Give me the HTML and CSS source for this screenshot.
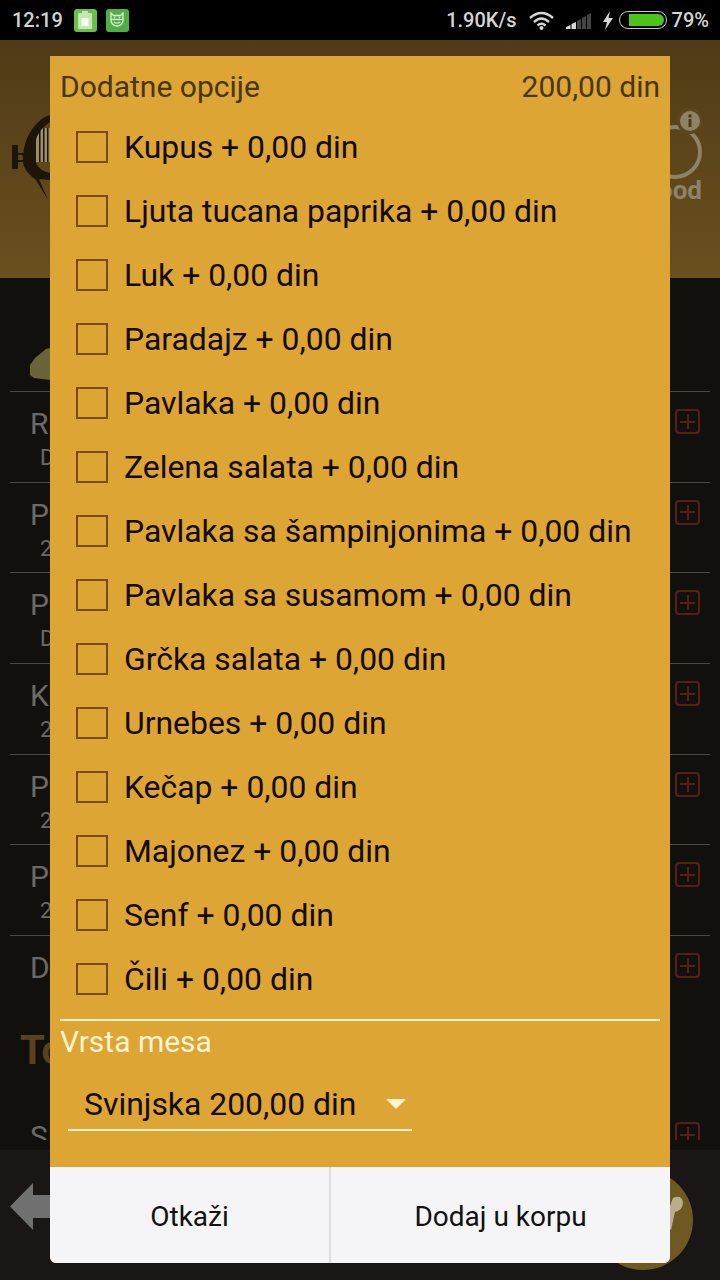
FILE: index.html
```html
<!DOCTYPE html>
<html lang="en">

<head>
    <meta charset="UTF-8">
    <title>Dodatne opcije</title>
    <link rel="stylesheet" href="styles.css">
</head>

<body>

    <div class="screen">

        <div class="statusbar">
            <div class="status-left">
                <span class="clock">12:19</span>
                <span class="note note-light">
                    <svg width="14" height="18" viewBox="0 0 14 18"><path d="M4 0h6v2h3a1 1 0 0 1 1 1v14a1 1 0 0 1-1 1H1a1 1 0 0 1-1-1V3a1 1 0 0 1 1-1h3z" fill="#c4e8b0"/><rect x="3.500" y="7" width="7" height="8" fill="#f2fbec"/></svg>
                </span>
                <span class="note">
                    <svg width="16" height="16" viewBox="0 0 16 16"><path d="M2 1l2.500 2.500h7L14 1v7a6 6 0 0 1-12 0z" fill="none" stroke="#d6f0c8" stroke-width="1.400"/><path d="M2 7.500h12" stroke="#d6f0c8" stroke-width="1.200"/><circle cx="5.500" cy="5.500" r="1" fill="#d6f0c8"/><circle cx="10.500" cy="5.500" r="1" fill="#d6f0c8"/><path d="M5 10q3 2.500 6 0" fill="none" stroke="#d6f0c8" stroke-width="1.200"/></svg>
                </span>
            </div>
            <div class="status-right">
                <span class="speed">1.90K/s</span>
                <svg class="wifi" width="25" height="19" viewBox="0 0 25 19" fill="none" stroke="#d8d8d8" stroke-width="2.400"><path d="M1 7Q12.500-3 24 7"/><path d="M5 11Q12.500 4 20 11"/><path d="M8.500 14.500Q12.500 11 16.500 14.500"/><circle cx="12.500" cy="17" r="2" fill="#d8d8d8" stroke="none"/></svg>
                <svg class="signal" width="26" height="17" viewBox="0 0 26 17"><path d="M0 17v-2l4.500-2v4z" fill="#d8d8d8"/><path d="M5.500 17v-5l4.500-2v7z" fill="#d8d8d8"/><path d="M11 17V9l4-2v10z" fill="#444"/><path d="M16 17V6l4-2v13z" fill="#444"/><path d="M21 17V3l4-2v16z" fill="#444"/></svg>
                <svg class="bolt" width="10" height="19" viewBox="0 0 10 19"><path d="M7 0L0 11h4l-2 8 8-12H5.500z" fill="#d8d8d8"/></svg>
                <span class="battery"><span class="battery-fill"></span></span>
                <span class="percent">79%</span>
            </div>
        </div>

        <div class="header">
            <svg class="logo" width="50" height="100" viewBox="0 0 50 100">
                <rect x="36" y="18" width="14" height="34" fill="#9a8d68"/>
                <path d="M39 18h1.500v34H39zM43 18h1.500v34H43zM47 18h1.500v34H47z" fill="#1d150a"/>
                <path d="M50 5C35 10 23 28 23 50c0 8 5 14 13 20l12 20-9-21 11 1v-7c-6-1-11-4-14-10V30c2-8 8-14 14-18z" fill="#1d150a"/>
                <rect x="12" y="35" width="6" height="24" fill="#1d150a"/>
                <path d="M18 43h6v2h-6zM18 50h6v2h-6z" fill="#1d150a"/>
            </svg>
            <div class="info-logo">
                <svg width="60" height="72" viewBox="0 0 60 72" fill="none"><circle cx="29" cy="44" r="25" stroke="#8f8266" stroke-width="4"/><circle cx="44" cy="13" r="13" fill="#5d461c"/><circle cx="44" cy="13" r="10" fill="#8f8266"/><rect x="42.500" y="11" width="3" height="8" fill="#4d3a18"/><rect x="42.500" y="6.500" width="3" height="3" fill="#4d3a18"/></svg>
                <span class="info-text">ood</span>
            </div>
        </div>

        <div class="content">
            <div class="section-top">
                <svg class="food-thumb" width="20" height="32" viewBox="0 0 20 32"><path d="M0 17l5-7L16 1l4-1v32l-16-2-4-3z" fill="#6b6438"/></svg>
            </div>
            <div class="food-row">
                <div class="food-text"><p class="food-name">R</p><p class="food-sub">D</p></div>
                <span class="add-btn"></span>
            </div>
            <div class="food-row">
                <div class="food-text"><p class="food-name">P</p><p class="food-sub">2</p></div>
                <span class="add-btn"></span>
            </div>
            <div class="food-row">
                <div class="food-text"><p class="food-name">P</p><p class="food-sub">D</p></div>
                <span class="add-btn"></span>
            </div>
            <div class="food-row">
                <div class="food-text"><p class="food-name">K</p><p class="food-sub">2</p></div>
                <span class="add-btn"></span>
            </div>
            <div class="food-row">
                <div class="food-text"><p class="food-name">P</p><p class="food-sub">2</p></div>
                <span class="add-btn"></span>
            </div>
            <div class="food-row">
                <div class="food-text"><p class="food-name">P</p><p class="food-sub">2</p></div>
                <span class="add-btn"></span>
            </div>
            <div class="food-row food-row-last">
                <div class="food-text"><p class="food-name">D</p></div>
                <span class="add-btn"></span>
            </div>
            <h2 class="section-title">To</h2>
            <div class="food-row food-row-cut">
                <div class="food-text"><p class="food-name">S</p></div>
                <span class="add-btn"></span>
            </div>
        </div>

        <div class="bottombar">
            <svg class="back-arrow" width="44" height="47" viewBox="0 0 44 47"><path d="M0 23.500L23 0v12h21v23H23v12z" fill="#707070"/></svg>
            <svg class="cart-circle" width="100" height="100" viewBox="0 0 100 100"><circle cx="50" cy="50" r="50" fill="#6e5a20"/><path d="M80 28q8-4 10 4 0 8-8 10l-4 18-2-2 1-22z" fill="#b9ae8e"/></svg>
        </div>

        <div class="overlay-dialog">
            <div class="dialog-head">
                <span>Dodatne opcije</span>
                <span>200,00 din</span>
            </div>

            <ul class="options">
                <li><span class="checkbox"></span>Kupus + 0,00 din</li>
                <li><span class="checkbox"></span>Ljuta tucana paprika + 0,00 din</li>
                <li><span class="checkbox"></span>Luk + 0,00 din</li>
                <li><span class="checkbox"></span>Paradajz + 0,00 din</li>
                <li><span class="checkbox"></span>Pavlaka + 0,00 din</li>
                <li><span class="checkbox"></span>Zelena salata + 0,00 din</li>
                <li><span class="checkbox"></span>Pavlaka sa šampinjonima + 0,00 din</li>
                <li><span class="checkbox"></span>Pavlaka sa susamom + 0,00 din</li>
                <li><span class="checkbox"></span>Grčka salata + 0,00 din</li>
                <li><span class="checkbox"></span>Urnebes + 0,00 din</li>
                <li><span class="checkbox"></span>Kečap + 0,00 din</li>
                <li><span class="checkbox"></span>Majonez + 0,00 din</li>
                <li><span class="checkbox"></span>Senf + 0,00 din</li>
                <li><span class="checkbox"></span>Čili + 0,00 din</li>
            </ul>

            <div class="meat">
                <div class="meat-title">Vrsta mesa</div>
                <div class="spinner">
                    <span>Svinjska 200,00 din</span>
                    <span class="arrow"></span>
                </div>
            </div>

            <div class="dialog-buttons">
                <div class="dialog-btn">Otkaži</div>
                <div class="dialog-btn">Dodaj u korpu</div>
            </div>
        </div>

    </div>

</body>

</html>
```
FILE: styles.css
```css
body {
    margin: 0;
    background-color: #000;
    font-family: Roboto, "Liberation Sans", sans-serif;
}

p {
    margin: 0;
}

.screen {
    position: relative;
    width: 720px;
    height: 1280px;
    overflow: hidden;
    display: flex;
    flex-direction: column;
    background-color: #12100c;
}

/* status bar */
.statusbar {
    height: 40px;
    flex: none;
    background-color: #000;
    color: #d4d4d4;
    font-size: 20px;
    font-weight: 500;
    display: flex;
    justify-content: space-between;
    align-items: center;
    padding: 0 11px 0 12px;
    box-sizing: border-box;
}

.status-left,
.status-right {
    display: flex;
    align-items: center;
}

.clock {
    margin-right: 11px;
}

.note {
    width: 23px;
    height: 23px;
    border-radius: 3px;
    background-color: #4fae48;
    margin-right: 9px;
    display: flex;
    justify-content: center;
    align-items: center;
}

.note-light {
    background-color: #6cbc4e;
}

.speed,
.wifi {
    margin-right: 12px;
}

.signal {
    margin-right: 11px;
}

.bolt {
    margin-right: 6px;
}

.battery {
    width: 48px;
    height: 18px;
    border: 1.5px solid #c8c8c8;
    border-radius: 9px;
    padding: 2px 2px 2px 9px;
    margin-right: 5px;
    box-sizing: border-box;
    display: block;
}

.battery-fill {
    display: block;
    width: 100%;
    height: 100%;
    border-radius: 0 6px 6px 0;
    background-color: #4cc41c;
}

/* background page */
.header {
    height: 238px;
    flex: none;
    background: linear-gradient(#503b17, #6a501e);
    display: flex;
    justify-content: space-between;
    align-items: flex-start;
}

.logo {
    margin-top: 70px;
}

.info-logo {
    margin: 68px 14px 0 0;
    display: flex;
    flex-direction: column;
    align-items: flex-end;
}

.info-text {
    color: #8f8266;
    font-size: 26px;
    line-height: 24px;
    font-weight: 700;
    margin: -2px 4px 0 0;
}

.content {
    height: 862px;
    flex: none;
    padding: 0 10px;
    overflow: hidden;
}

.section-top {
    height: 113px;
    display: flex;
    align-items: flex-end;
    padding-bottom: 11px;
    box-sizing: border-box;
}

.food-thumb {
    margin-left: 20px;
}

.food-row {
    height: 90.7px;
    box-sizing: border-box;
    border-top: 1px solid #4a4a4a;
    display: flex;
    justify-content: space-between;
    padding: 14px 10px 0 20px;
    color: #6a6a6a;
}

.food-row-last {
    height: 64px;
}

.food-row-cut {
    border-top: none;
}

.food-text {
    width: 20px;
}

.food-name {
    font-size: 30px;
    line-height: 36px;
}

.food-sub {
    font-size: 22px;
    line-height: 24px;
    margin: 4px 0 0 10px;
}

.add-btn {
    position: relative;
    width: 25px;
    height: 25px;
    margin-top: 3px;
    border: 2px solid #55201a;
    border-radius: 4px;
    box-sizing: border-box;
}

.add-btn::before,
.add-btn::after {
    content: '';
    position: absolute;
    background-color: #55201a;
}

.add-btn::before {
    left: 3px;
    right: 3px;
    top: 9.5px;
    height: 2px;
}

.add-btn::after {
    top: 3px;
    bottom: 3px;
    left: 9.5px;
    width: 2px;
}

.section-title {
    margin: 0 0 0 10px;
    width: 30px;
    height: 106px;
    padding-top: 30px;
    box-sizing: border-box;
    overflow: hidden;
    font-size: 40px;
    line-height: 44px;
    color: #5a431c;
}

.bottombar {
    height: 130px;
    flex: none;
    margin-top: 10px;
    background-color: #1a1615;
    display: flex;
    justify-content: space-between;
    align-items: flex-start;
    padding: 0 27px 0 10px;
    box-sizing: border-box;
}

.back-arrow {
    margin-top: 33px;
}

.cart-circle {
    margin-top: 20px;
}

/* dialog */
.overlay-dialog {
    position: absolute;
    left: 50px;
    top: 56px;
    width: 620px;
    height: 1207px;
    background-color: #dda534;
    border-radius: 0 0 6px 6px;
    display: flex;
    flex-direction: column;
    overflow: hidden;
}

.dialog-head {
    display: flex;
    justify-content: space-between;
    padding: 13px 10px 0 10px;
    height: 46px;
    font-size: 30px;
    line-height: 36px;
    color: #4a3412;
}

.options {
    list-style: none;
    margin: 0 10px;
    padding: 0 0 0 16px;
    border-bottom: 2px solid #fff3c8;
    height: 906px;
    box-sizing: border-box;
}

.options li {
    height: 64px;
    display: flex;
    align-items: center;
    font-size: 31.9px;
    color: #140a04;
}

.checkbox {
    width: 32px;
    height: 32px;
    border: 2px solid #7a4a10;
    box-sizing: border-box;
    margin-right: 16px;
}

.meat {
    flex: 1;
    padding: 3px 10px 0;
}

.meat-title {
    font-size: 30px;
    line-height: 36px;
    color: #fff3d2;
}

.spinner {
    width: 344px;
    height: 53px;
    margin: 18px 0 0 8px;
    box-sizing: border-box;
    border-bottom: 2px solid #fff3c8;
    padding-left: 16px;
    display: flex;
    align-items: center;
    font-size: 31.9px;
    color: #140a04;
}

.arrow {
    width: 0;
    height: 0;
    margin-left: 30px;
    border-left: 10px solid transparent;
    border-right: 10px solid transparent;
    border-top: 10px solid #fff3d2;
}

.dialog-buttons {
    height: 96px;
    flex: none;
    display: flex;
    background-color: #f5f5f7;
}

.dialog-btn {
    flex: 1;
    display: flex;
    justify-content: center;
    align-items: center;
    padding-top: 3px;
    box-sizing: border-box;
    font-size: 28px;
    color: #111;
}

.dialog-btn:first-child {
    flex: none;
    width: 281px;
    border-right: 2px solid #dcdcdc;
}
```
